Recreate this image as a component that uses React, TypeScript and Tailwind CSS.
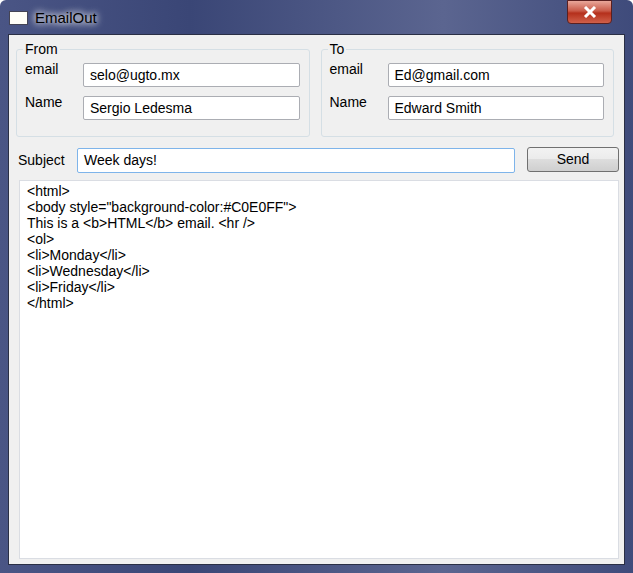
export default function App() {
  const f = { fontFamily: '"Liberation Sans", Arial, sans-serif' };
  const input = "h-[24px] border border-[#abadb3] bg-white px-[6px] text-[14px] leading-[22px] text-black rounded-[2px]";
  const group = (title: string, email: string, name: string) => (
    <div className="relative flex-1 border border-[#d5dfe5] rounded-[3px] h-[88px] pt-[13px] pl-[8px] pr-[9px]">
      <span className="absolute -top-[9px] left-[6px] bg-[#f0f0f0] px-[2px] text-[14px] leading-[16px]">{title}</span>
      <div className="flex items-start">
        <span className="w-[58px] text-[14px] leading-[16px] -mt-[2px]">email</span>
        <div className={input + " flex-1"}>{email}</div>
      </div>
      <div className="flex items-start mt-[9px]">
        <span className="w-[58px] text-[14px] leading-[16px] -mt-[2px]">Name</span>
        <div className={input + " flex-1"}>{name}</div>
      </div>
    </div>
  );
  const lines = [
    '<html>',
    '<body style="background-color:#C0E0FF">',
    'This is a <b>HTML</b> email. <hr />',
    '<ol>',
    '<li>Monday</li>',
    '<li>Wednesday</li>',
    '<li>Friday</li>',
    '</html>',
  ];
  return (
    <div style={f} className="w-[633px] h-[573px] bg-[linear-gradient(90deg,#4a5585,#3a4676_30%,#5b6590_70%,#3f4b7b)] rounded-t-[6px] flex flex-col px-[8px] pb-[8px] text-black">
      <div className="h-[34px] flex items-start relative">
        <div className="mt-[11px] ml-[1px] w-[19px] h-[14px] border border-[#445] bg-[#fffef8]" />
        <span className="ml-[7px] mt-[8px] text-[15px] leading-[20px] text-black [text-shadow:0_0_8px_#fff,0_0_6px_#fff]">EmailOut</span>
        <div className="absolute right-[13px] top-0 w-[45px] h-[24px] rounded-b-[4px] border border-[#5a2020] bg-[linear-gradient(180deg,#e9a79a,#c95a48_45%,#b5301c_55%,#d0604a)] flex items-center justify-center">
          <svg width="14" height="12" viewBox="0 0 14 12"><path d="M2 1 L12 11 M12 1 L2 11" stroke="#fff" strokeWidth="3" /></svg>
        </div>
      </div>
      <div className="flex-1 bg-[#f0f0f0] border border-[#2a2f45] flex flex-col pl-[7px] pr-[5px] pt-[14px] pb-[5px]">
        <div className="flex gap-[11px] mr-[5px]">
          {group("From", "selo@ugto.mx", "Sergio Ledesma")}
          {group("To", "Ed@gmail.com", "Edward Smith")}
        </div>
        <div className="flex items-center mt-[11px] ml-[2px]">
          <span className="w-[59px] text-[14px]">Subject</span>
          <div className="h-[25px] w-[438px] border border-[#7eb4ea] bg-white px-[6px] text-[14px] leading-[23px] rounded-[2px]">Week days!</div>
          <div className="ml-[12px] flex-1 h-[25px] -mt-[2px] border border-[#707070] rounded-[3px] bg-[linear-gradient(180deg,#f2f2f2,#ebebeb_50%,#dddddd_50%,#cfcfcf)] text-[14px] flex items-center justify-center">Send</div>
        </div>
        <div className="flex-1 mt-[7px] ml-[3px] bg-white border border-[#dadde3] px-[7px] pt-[2px] text-[14px] leading-[16px] whitespace-pre">
          {lines.map((l, i) => <div key={i}>{l}</div>)}
        </div>
      </div>
    </div>
  );
}
